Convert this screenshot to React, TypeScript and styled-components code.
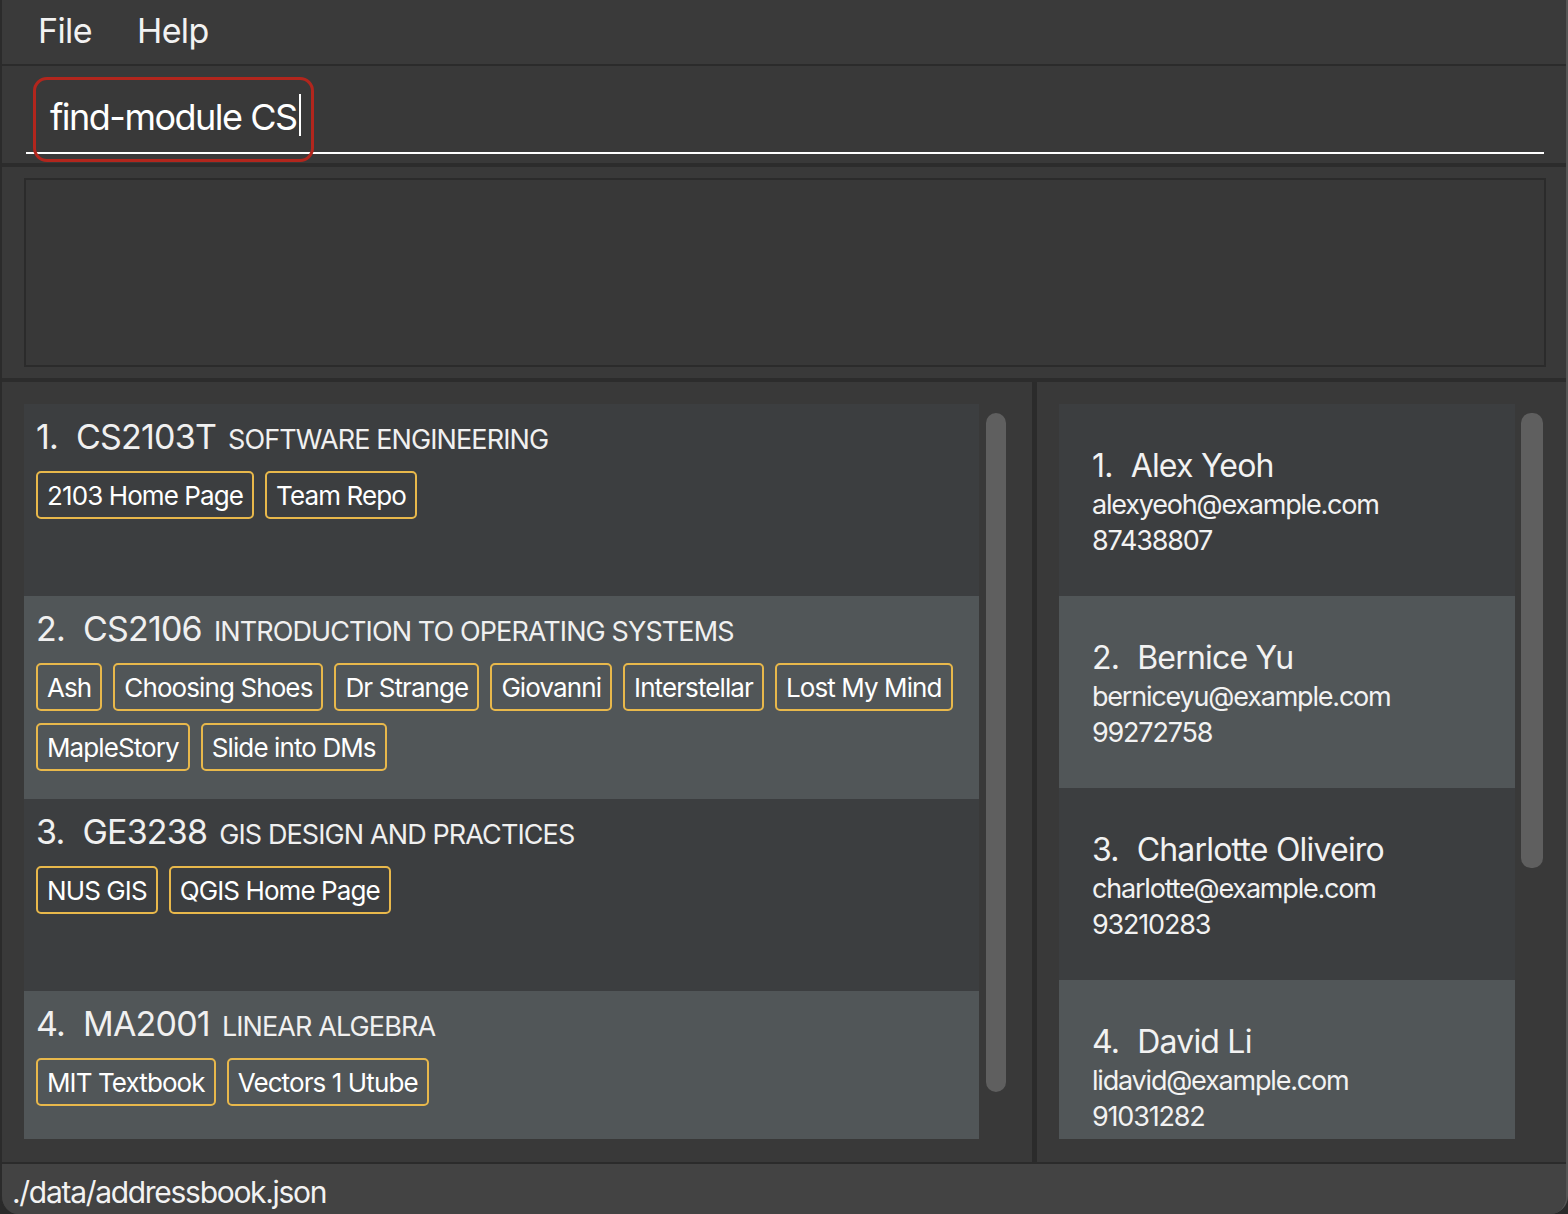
import React from "react";
import styled, { createGlobalStyle } from "styled-components";

const GlobalStyle = createGlobalStyle`
	html, body {
		margin: 0;
		padding: 0;
		background: #2a2a2a;
	}
	* {
		box-sizing: border-box;
	}
`;

const Window = styled.div`
	width: 1568px;
	height: 1214px;
	display: flex;
	flex-direction: column;
	background: #393939;
	border-left: 2px solid #2b2b2b;
	border-right: 2px solid #555;
	border-radius: 0 0 18px 18px;
	overflow: hidden;
	font-family: Inter, "Liberation Sans", sans-serif;
	color: #fff;
`;

const MenuBar = styled.div`
	height: 66px;
	flex: none;
	display: flex;
	align-items: center;
	gap: 45px;
	padding: 0 0 4px 36px;
	background: #3a3a3a;
	border-bottom: 2px solid #2b2b2b;
	font-size: 34px;
	letter-spacing: -0.6px;
	color: #f2f2f2;
`;

const CommandArea = styled.div`
	height: 101px;
	flex: none;
	padding: 0 22px 0 24px;
	border-bottom: 4px solid #2c2c2c;
`;

const CommandField = styled.div`
	position: relative;
	height: 88px;
	padding: 29px 0 0 24px;
	border-bottom: 2px solid #ffffff;
	font-size: 36px;
	letter-spacing: -1.5px;
	color: #fff;
	display: flex;
	align-items: flex-start;
`;

const Caret = styled.span`
	display: inline-block;
	width: 2px;
	height: 42px;
	margin-left: 2px;
	margin-top: -1px;
	background: #fff;
`;

const Highlight = styled.div`
	position: absolute;
	left: 7px;
	top: 11px;
	width: 281px;
	height: 85px;
	border: 3px solid #b2261d;
	border-radius: 14px;
	pointer-events: none;
`;

const ResultArea = styled.div`
	height: 215px;
	flex: none;
	padding: 11px 20px 11px 22px;
	border-bottom: 4px solid #2c2c2c;
`;

const ResultBox = styled.div`
	height: 100%;
	background: #383838;
	border: 2px solid #2b2b2b;
`;

const Lists = styled.div`
	height: 780px;
	flex: none;
	display: flex;
`;

const Panel = styled.div<{ $width: number; $right: number; $gap: number }>`
	width: ${(p) => p.$width}px;
	flex: none;
	display: flex;
	gap: ${(p) => p.$gap}px;
	padding: 22px ${(p) => p.$right}px 23px 22px;
`;

const Divider = styled.div`
	width: 5px;
	background: #2b2b2b;
	flex: none;
`;

const Viewport = styled.div`
	flex: 1;
	overflow: hidden;
	display: flex;
	flex-direction: column;
`;

const Scrollbar = styled.div<{ $height: number; $width: number }>`
	width: ${(p) => p.$width}px;
	flex: none;
	align-self: flex-start;
	margin-top: 9px;
	height: ${(p) => p.$height}px;
	border-radius: 10px;
	background: #5f5f5f;
`;

const ModuleCard = styled.div<{ $alt: boolean }>`
	flex: none;
	min-height: 192px;
	padding: 12px 12px 28px 12px;
	background: ${(p) => (p.$alt ? "#515658" : "#3c3e40")};
	display: flex;
	flex-direction: column;
	gap: 14px;
`;

const ModuleHeading = styled.div`
	display: flex;
	align-items: baseline;
	gap: 12px;
	white-space: nowrap;
`;

const ModuleCode = styled.span`
	font-size: 34px;
	letter-spacing: -0.8px;
	color: #f0f0f0;
`;

const Index = styled.span`
	margin-right: 18px;
`;

const ModuleName = styled.span`
	font-size: 27px;
	letter-spacing: -0.9px;
	color: #f0f0f0;
`;

const Tags = styled.div`
	display: flex;
	flex-wrap: wrap;
	gap: 12px 11px;
`;

const Tag = styled.span`
	height: 48px;
	display: inline-flex;
	align-items: center;
	padding: 0 9px;
	border: 2px solid #e8b84b;
	border-radius: 5px;
	font-size: 26px;
	letter-spacing: -0.9px;
	color: #fff;
	white-space: nowrap;
`;

const PersonCard = styled.div<{ $alt: boolean }>`
	flex: none;
	height: 192px;
	padding: 41px 12px 0 33px;
	background: ${(p) => (p.$alt ? "#515658" : "#3c3e40")};
	display: flex;
	flex-direction: column;
`;

const PersonName = styled.div`
	font-size: 32px;
	letter-spacing: -0.8px;
	line-height: 42px;
	color: #f2f2f2;
	white-space: nowrap;
`;

const PersonLine = styled.div`
	font-size: 27px;
	letter-spacing: -1.2px;
	line-height: 36px;
	color: #f2f2f2;
`;

const StatusBar = styled.div`
	flex: 1;
	background: #434343;
	border-top: 2px solid #2b2b2b;
	padding: 10px 0 0 10px;
	font-size: 30px;
	letter-spacing: -1.3px;
	color: #f2f2f2;
`;

const modules = [
	{ code: "CS2103T", name: "SOFTWARE ENGINEERING", tags: ["2103 Home Page", "Team Repo"] },
	{
		code: "CS2106",
		name: "INTRODUCTION TO OPERATING SYSTEMS",
		tags: ["Ash", "Choosing Shoes", "Dr Strange", "Giovanni", "Interstellar", "Lost My Mind", "MapleStory", "Slide into DMs"],
	},
	{ code: "GE3238", name: "GIS DESIGN AND PRACTICES", tags: ["NUS GIS", "QGIS Home Page"] },
	{ code: "MA2001", name: "LINEAR ALGEBRA", tags: ["MIT Textbook", "Vectors 1 Utube"] },
];

const persons = [
	{ name: "Alex Yeoh", email: "alexyeoh@example.com", phone: "87438807" },
	{ name: "Bernice Yu", email: "berniceyu@example.com", phone: "99272758" },
	{ name: "Charlotte Oliveiro", email: "charlotte@example.com", phone: "93210283" },
	{ name: "David Li", email: "lidavid@example.com", phone: "91031282" },
];

export default function App() {
	return (
		<>
			<GlobalStyle />
			<Window>
				<MenuBar>
					<span>File</span>
					<span>Help</span>
				</MenuBar>
				<CommandArea>
					<CommandField>
						<span>find-module CS</span>
						<Caret />
						<Highlight />
					</CommandField>
				</CommandArea>
				<ResultArea>
					<ResultBox />
				</ResultArea>
				<Lists>
					<Panel $width={1030} $right={26} $gap={7}>
						<Viewport>
							{modules.map((m, i) => (
								<ModuleCard key={m.code} $alt={i % 2 === 1}>
									<ModuleHeading>
										<ModuleCode>
											<Index>{i + 1}.</Index>
											{m.code}
										</ModuleCode>
										<ModuleName>{m.name}</ModuleName>
									</ModuleHeading>
									<Tags>
										{m.tags.map((t) => (
											<Tag key={t}>{t}</Tag>
										))}
									</Tags>
								</ModuleCard>
							))}
						</Viewport>
						<Scrollbar $height={679} $width={20} />
					</Panel>
					<Divider />
					<Panel $width={529} $right={23} $gap={6}>
						<Viewport>
							{persons.map((p, i) => (
								<PersonCard key={p.name} $alt={i % 2 === 1}>
									<PersonName>
										<Index>{i + 1}.</Index>
										{p.name}
									</PersonName>
									<PersonLine>{p.email}</PersonLine>
									<PersonLine>{p.phone}</PersonLine>
								</PersonCard>
							))}
						</Viewport>
						<Scrollbar $height={455} $width={22} />
					</Panel>
				</Lists>
				<StatusBar>./data/addressbook.json</StatusBar>
			</Window>
		</>
	);
}
